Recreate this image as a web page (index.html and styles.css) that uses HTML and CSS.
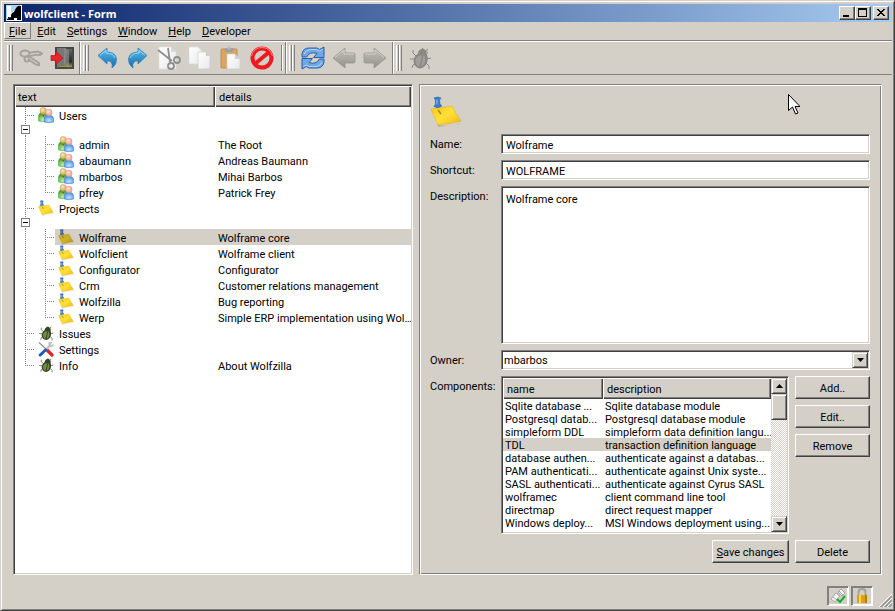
FILE: index.html
```html
<!DOCTYPE html>
<html lang="en">
<head>
<meta charset="utf-8">
<title>wolfclient - Form</title>
<link rel="stylesheet" href="styles.css">
</head>
<body>
<svg class="defs" aria-hidden="true">
  <defs>
    <linearGradient id="gNote" x1="0" y1="0" x2="1" y2="1"><stop offset="0" stop-color="#f8c818"/><stop offset=".5" stop-color="#ffe038"/><stop offset="1" stop-color="#efb510"/></linearGradient>
    <linearGradient id="gBlue" x1="0" y1="0" x2="0" y2="1"><stop offset="0" stop-color="#5cc0ee"/><stop offset="1" stop-color="#1468ac"/></linearGradient>
    <linearGradient id="gGray" x1="0" y1="0" x2="0" y2="1"><stop offset="0" stop-color="#c4c2bb"/><stop offset="1" stop-color="#93918a"/></linearGradient>
    <linearGradient id="gPage" x1="0" y1="0" x2="1" y2="1"><stop offset="0" stop-color="#fff"/><stop offset="1" stop-color="#e9e9e9"/></linearGradient>
    <linearGradient id="gDoor" x1="0" y1="0" x2="0" y2="1"><stop offset="0" stop-color="#666"/><stop offset=".7" stop-color="#282828"/><stop offset="1" stop-color="#a0a828"/></linearGradient>
    <radialGradient id="gGreen" cx=".5" cy=".8" r=".7"><stop offset="0" stop-color="#c8f0b0"/><stop offset="1" stop-color="#3aa52c"/></radialGradient>
    <radialGradient id="gBody" cx=".5" cy=".7" r=".7"><stop offset="0" stop-color="#c4e4ff"/><stop offset="1" stop-color="#3f8df0"/></radialGradient>
    <radialGradient id="gTan" cx=".4" cy=".35" r=".7"><stop offset="0" stop-color="#ffeab8"/><stop offset="1" stop-color="#d3a04c"/></radialGradient>
    <radialGradient id="gPink" cx=".4" cy=".35" r=".7"><stop offset="0" stop-color="#ffe6dc"/><stop offset="1" stop-color="#e89a88"/></radialGradient>
    <symbol id="users" viewBox="0 0 16 16">
      <path d="M.4 14V10q0-4.400 4.600-4.400t4.600 4.400v4q-4.600 1.500-9.200 0z" fill="url(#gGreen)" stroke="#4cad3e" stroke-width=".5"/>
      <path d="M4 8l1.400 2L6.500 8z" fill="#e02c18"/>
      <circle cx="5.200" cy="3.700" r="3.200" fill="url(#gTan)" stroke="#c89848" stroke-width=".5"/>
      <path d="M6.300 15v-2.700q0-4 4.600-4t4.700 4V15q-4.600 1.400-9.300 0z" fill="url(#gBody)" stroke="#3c82dc" stroke-width=".6"/>
      <circle cx="10.800" cy="5.400" r="3.300" fill="url(#gPink)" stroke="#de9484" stroke-width=".5"/>
    </symbol>
    <symbol id="note" viewBox="0 0 32 32">
      <path d="M7 29q12 2 24-2l-2 1-20 3z" fill="#9c9888" opacity=".6"/>
      <path d="M1 13 22 10q4 8 9 15-11 3-23 4Q4 21 1 13z" fill="url(#gNote)" stroke="#dcae18" stroke-width=".5"/>
      <path d="m8 14 3 4" stroke="#a98b20" stroke-width="1.500"/>
      <path d="M4 2q3.500-2 7 0l-1.500 2 .5 4 2 2q-4.500 3-8 .5L5.500 8 5.400 4z" fill="#3a7fca" stroke="#2860a8" stroke-width=".6"/>
      <path d="M7 3.500v5" stroke="#8cc0f0" stroke-width="1"/>
    </symbol>
    <symbol id="bug" viewBox="0 0 24 24">
      <path d="M8 10 5 7V4m3 9H2m6 4-3 2-1 3m11-11 4-3 0-3m-1 8 5-1m-5 5 3 3v3M13 5l2-3m1 4 4-3" fill="none" stroke="currentColor" stroke-width="1"/>
      <path d="M15 2.500q4 1.500 3 5 2.500 3 1.500 7.500-1.500 6.500-7.500 7.500-6-1-6.500-7 0-5 4.500-8 0-4 5-5z" fill="currentColor"/>
      <path class="bug-back" d="M11 9.500q-4 2.500-3.500 6.500 .5 3.500 3.500 5 2-5 3-11.500zM15.500 9q2.500 3 1.500 7-1 3.500-4 4.500 1-5.500 2.500-11.500z"/>
    </symbol>
    <symbol id="tools" viewBox="0 0 16 16">
      <path d="M1 1.500 9 9" stroke="#8e8e8e" stroke-width="1.200"/>
      <path d="m8.500 8.500 5.500 5.500" stroke="#d8242c" stroke-width="3.200" stroke-linecap="round"/>
      <path d="M12 4.500 8 8.500" stroke="#b8bcc0" stroke-width="2"/>
      <path d="M10.500 1.500q2-1.500 4 0l-2 1.500 1 1 2-1q.5 3-3 3-2.500-1.500-2-4.500z" fill="#b8bcc0"/>
      <path d="M7.500 9 2.200 14" stroke="#1c58c4" stroke-width="3" stroke-linecap="round"/>
    </symbol>
    <symbol id="arrow" viewBox="0 0 24 24">
      <path d="M1 12 13 2v5h8.500q1.500 0 1.500 1.500v7q0 1.500-1.500 1.500H13v5z" fill="url(#gGray)" stroke="#96948e" stroke-width=".8"/>
      <path d="M3 11.500l9-7.500v4h10" fill="none" stroke="#d0cec8" stroke-width="1"/>
    </symbol>
    <symbol id="curl" viewBox="0 0 24 24">
      <path d="M3 9.500 12 2v4q8.500 0 9.500 7 .5 5-4.500 9 1.500-7-5-7.300V18z" fill="url(#gBlue)" stroke="#2c80ba" stroke-width=".8"/>
      <path d="M5 9.300 11 4.500V7q7 0 9 5" fill="none" stroke="#a4e0fa" stroke-width=".9"/>
    </symbol>
  </defs>
</svg>
<div class="window">
  <header class="titlebar">
    <svg class="app-icon" viewBox="0 0 16 16"><path fill="#fff" d="M0 0h16v16H0z"/><path fill="#a8d4f0" d="M0 0h14v1H1v14H0zM5 1h7v2L5 8z"/><path d="M15 1v14H1v-1l4-2v-2l1-2 2-1 2-4 2-2zM4 12H2v1h1z"/><path fill="#fff" d="M8 13h3v2H8z"/></svg>
    <h1 class="title">wolfclient - Form</h1>
    <button class="win-btn" aria-label="Minimize"><svg viewBox="0 0 12 10"><path d="M2 7h6v2H2z"/></svg></button>
    <button class="win-btn" aria-label="Maximize"><svg viewBox="0 0 12 10"><path fill-rule="evenodd" d="M1 0h9v9H1zM2 2v6h7V2z"/></svg></button>
    <button class="win-btn win-close" aria-label="Close"><svg viewBox="0 0 12 10"><path d="M2 1h2v1h1v1h2V2h1V1h2v1H9v1H8v1H7v1h1v1h1v1h1v1H8V7H7V6H5v1H4v1H2V7h1V6h1V5h1V4H4V3H3V2H2z"/></svg></button>
  </header>
  <nav class="menubar">
    <button class="menu active"><u>F</u>ile</button>
    <button class="menu"><u>E</u>dit</button>
    <button class="menu"><u>S</u>ettings</button>
    <button class="menu"><u>W</u>indow</button>
    <button class="menu"><u>H</u>elp</button>
    <button class="menu"><u>D</u>eveloper</button>
  </nav>
  <div class="toolbars">
    <div class="toolbar">
      <span class="handle"></span>
      <button class="tool" aria-label="Login"><svg viewBox="0 0 24 24"><g fill="none" stroke="#a3a19b" stroke-width="2"><ellipse cx="6" cy="7.500" rx="4.500" ry="3"/><path d="M10 7 19 5.500l4 2-2 1.500-3-.5-7 1.500"/><path d="m9 10 11 7v2l-3-.5-8-5.500"/><circle cx="8" cy="13" r="2.500"/></g><path d="M11 8.500 20 7M10 12l8 5.500" stroke="#cfcdc7"/></svg></button>
      <button class="tool" aria-label="Exit"><svg viewBox="0 0 24 24"><path fill="#45484a" d="M5 1h19v22H5z"/><path fill="url(#gDoor)" d="M7 3h15v18H7z"/><path fill="#777" d="M7 2h9v15l-9 5z"/><path fill="#8d8d8d" d="m14 2 5 2v18l-5-3z" opacity=".7"/><path fill="#e8262c" stroke="#a81820" stroke-width=".7" d="M1 9.500h5V5.500l7 6.500-7 6.500v-4H1z"/></svg></button>
    </div>
    <div class="toolbar">
      <span class="handle"></span>
      <button class="tool" aria-label="Undo"><svg viewBox="0 0 24 24"><use href="#curl"/></svg></button>
      <button class="tool" aria-label="Redo"><svg class="flip" viewBox="0 0 24 24"><use href="#curl"/></svg></button>
      <button class="tool" aria-label="Cut"><svg viewBox="0 0 24 24"><path fill="url(#gPage)" stroke="#ddd" stroke-width=".6" d="M2 1h12l5 5v17H2z"/><path fill="#d8d8d8" d="M14 1v5h5z"/><g fill="none" stroke="#8f8f8f" stroke-width="1.800"><path d="m1 4 14 11M11 2l2 14"/><circle cx="20" cy="14" r="3"/><circle cx="14" cy="20" r="3"/></g></svg></button>
      <button class="tool" aria-label="Copy"><svg viewBox="0 0 24 24"><path fill="url(#gPage)" stroke="#d8d8d8" stroke-width=".6" d="M1 1h9l4 4v13H1z"/><path fill="url(#gPage)" stroke="#c8c8c8" stroke-width=".7" d="M10 6h8l4 4v13H10z"/><path fill="#ccc" d="M18 6v4h4z"/></svg></button>
      <button class="tool" aria-label="Paste"><svg viewBox="0 0 24 24"><rect x="2" y="3" width="16" height="19" rx="1" fill="#dba564" stroke="#c58c48"/><path fill="#a0a0a0" d="M6 2h8v4H6z"/><circle cx="10" cy="2" r="1.800" fill="#bbb"/><path fill="url(#gPage)" stroke="#ccc" stroke-width=".7" d="M8 8h8l5 5v10H8z"/><path fill="#d0d0d0" d="M16 8v5h5z"/></svg></button>
      <button class="tool" aria-label="Stop"><svg viewBox="0 0 24 24"><circle cx="12" cy="12" r="9.500" fill="none" stroke="#f01820" stroke-width="4"/><path d="m6 17 12-10" stroke="#f01820" stroke-width="4"/><path d="M1.500 10Q4 1.500 12 1.500T22.500 10" fill="none" stroke="#ff8480" stroke-width="1"/></svg></button>
      <span class="rule"></span>
    </div>
    <div class="toolbar">
      <span class="handle"></span>
      <button class="tool" aria-label="Refresh"><svg viewBox="0 0 24 24"><g fill="#6fa8e4" stroke="#245ea8" stroke-width="1"><path d="M1 11V8q1-6 7-6h8l2.500 1.500L23 1v10.500H12.500l3.500-4Q9 5 5.500 11z"/><path d="M23 13v3q-1 6-7 6H8l-2.500-1.500L1 23V12.500h10.500L8 16.500q7 2.500 10.500-3.500z"/></g><path d="M3 8q2-4.500 6-4.500h7l2.500 1.500 3-1.500M21 16q-2 4.500-6 4.500H8L5.500 19l-3 1.500" fill="none" stroke="#b0d4f6"/></svg></button>
      <button class="tool" aria-label="Back"><svg viewBox="0 0 24 24"><use href="#arrow"/></svg></button>
      <button class="tool" aria-label="Forward"><svg class="flip" viewBox="0 0 24 24"><use href="#arrow"/></svg></button>
    </div>
    <div class="toolbar">
      <span class="handle"></span>
      <button class="tool bug-gray" aria-label="Debug"><svg viewBox="0 0 24 24"><use href="#bug"/></svg></button>
    </div>
  </div>
  <main class="content">
    <section class="tree sunken">
      <table class="tree-table">
        <thead><tr><th class="col-text">text</th><th>details</th></tr></thead>
        <tbody>
          <tr class="parent"><td><div class="node"><span class="guide branch"><button class="expander" aria-label="Collapse Users"></button></span><svg><use href="#users"/></svg>Users</div></td><td></td></tr>
          <tr><td><div class="node"><span class="guide line"></span><span class="guide branch"></span><svg><use href="#users"/></svg>admin</div></td><td>The Root</td></tr>
          <tr><td><div class="node"><span class="guide line"></span><span class="guide branch"></span><svg><use href="#users"/></svg>abaumann</div></td><td>Andreas Baumann</td></tr>
          <tr><td><div class="node"><span class="guide line"></span><span class="guide branch"></span><svg><use href="#users"/></svg>mbarbos</div></td><td>Mihai Barbos</td></tr>
          <tr><td><div class="node"><span class="guide line"></span><span class="guide branch last"></span><svg><use href="#users"/></svg>pfrey</div></td><td>Patrick Frey</td></tr>
          <tr class="parent"><td><div class="node"><span class="guide branch"><button class="expander" aria-label="Collapse Projects"></button></span><svg><use href="#note"/></svg>Projects</div></td><td></td></tr>
          <tr class="selected"><td><div class="node"><span class="guide line"></span><span class="guide branch"></span><svg><use href="#note"/></svg>Wolframe</div></td><td>Wolframe core</td></tr>
          <tr><td><div class="node"><span class="guide line"></span><span class="guide branch"></span><svg><use href="#note"/></svg>Wolfclient</div></td><td>Wolframe client</td></tr>
          <tr><td><div class="node"><span class="guide line"></span><span class="guide branch"></span><svg><use href="#note"/></svg>Configurator</div></td><td>Configurator</td></tr>
          <tr><td><div class="node"><span class="guide line"></span><span class="guide branch"></span><svg><use href="#note"/></svg>Crm</div></td><td>Customer relations management</td></tr>
          <tr><td><div class="node"><span class="guide line"></span><span class="guide branch"></span><svg><use href="#note"/></svg>Wolfzilla</div></td><td>Bug reporting</td></tr>
          <tr><td><div class="node"><span class="guide line"></span><span class="guide branch last"></span><svg><use href="#note"/></svg>Werp</div></td><td>Simple ERP implementation using Wol…</td></tr>
          <tr><td><div class="node"><span class="guide branch"></span><svg class="bug-green"><use href="#bug"/></svg>Issues</div></td><td></td></tr>
          <tr><td><div class="node"><span class="guide branch"></span><svg><use href="#tools"/></svg>Settings</div></td><td></td></tr>
          <tr><td><div class="node"><span class="guide branch last"></span><svg class="bug-green"><use href="#bug"/></svg>Info</div></td><td>About Wolfzilla</td></tr>
        </tbody>
      </table>
    </section>
    <form class="panel">
      <svg class="panel-icon" viewBox="0 0 32 32"><use href="#note"/></svg>
      <label for="name">Name:</label>
      <input class="sunken field" id="name" type="text" value="Wolframe">
      <label for="shortcut">Shortcut:</label>
      <input class="sunken field" id="shortcut" type="text" value="WOLFRAME">
      <label for="description">Description:</label>
      <textarea class="sunken field" id="description">Wolframe core</textarea>
      <label for="owner">Owner:</label>
      <span class="combo sunken"><select id="owner"><option>mbarbos</option></select><span class="drop"><svg viewBox="0 0 7 4"><path d="M0 0h7L3.500 4z"/></svg></span></span>
      <span class="label">Components:</span>
      <div class="components">
        <div class="list sunken">
          <div class="list-view">
            <table class="list-table">
              <thead><tr><th class="col-name">name</th><th>description</th></tr></thead>
              <tbody>
                <tr><td>Sqlite database ...</td><td>Sqlite database module</td></tr>
                <tr><td>Postgresql datab...</td><td>Postgresql database module</td></tr>
                <tr><td>simpleform DDL</td><td>simpleform data definition langu...</td></tr>
                <tr class="selected"><td>TDL</td><td>transaction definition language</td></tr>
                <tr><td>database authen...</td><td>authenticate against a databas...</td></tr>
                <tr><td>PAM authenticati...</td><td>authenticate against Unix syste...</td></tr>
                <tr><td>SASL authenticati...</td><td>authenticate against Cyrus SASL</td></tr>
                <tr><td>wolframec</td><td>client command line tool</td></tr>
                <tr><td>directmap</td><td>direct request mapper</td></tr>
                <tr><td>Windows deploy...</td><td>MSI Windows deployment using...</td></tr>
              </tbody>
            </table>
          </div>
          <div class="scrollbar">
            <button type="button" class="scroll-btn" aria-label="Scroll up"><svg viewBox="0 0 7 4"><path d="M0 4h7L3.500 0z"/></svg></button>
            <div class="thumb"></div>
            <button type="button" class="scroll-btn" aria-label="Scroll down"><svg viewBox="0 0 7 4"><path d="M0 0h7L3.500 4z"/></svg></button>
          </div>
        </div>
        <div class="side">
          <button type="button" class="btn">Add..</button>
          <button type="button" class="btn">Edit..</button>
          <button type="button" class="btn">Remove</button>
        </div>
      </div>
      <div class="actions">
        <button type="button" class="btn"><u>S</u>ave changes</button>
        <button type="button" class="btn">Delete</button>
      </div>
    </form>
  </main>
  <footer class="statusbar">
    <span class="status"><svg viewBox="0 0 16 16"><path fill="#f4f4f4" stroke="#8c8c8c" stroke-width=".7" d="m1 11 5-6 4 3-5 6zM8 4l3-3 4 4-3 3z"/><path d="m6 5 4 3M3 9l4 3M9 3l4 4" stroke="#aaa"/><path d="m7 11 3 3 5-6" fill="none" stroke="#10b030" stroke-width="2"/></svg></span>
    <span class="status"><svg viewBox="0 0 16 16"><path d="M4.500 8V4q0-3 3.500-3t3.500 3v4" fill="none" stroke="#a4a49c" stroke-width="2"/><rect x="3" y="7" width="10" height="8" fill="#e0a010"/><path fill="#f8dc58" d="M5 7h2v8H5z"/><path fill="#b87c08" d="M11 7h2v8h-2z"/></svg></span>
    <svg class="grip" viewBox="0 0 13 13"><path d="M0 13 13 0M4 13l9-9M8 13l5-5" stroke="#fff"/><path d="M1.500 13 13 1.500M2.500 13 13 2.500M5.500 13 13 5.500M6.500 13 13 6.500M9.500 13 13 9.500M10.500 13l2.500-2.500" stroke="#808080"/></svg>
  </footer>
</div>
<svg class="cursor" viewBox="0 0 12 21" aria-hidden="true"><path d="M.5.5v16l4-3.500 3 7 2.500-1-3-6.500h5z" fill="#fff" stroke="#000"/></svg>
</body>
</html>
```
FILE: styles.css
```css
:root {
  --face: #d4d0c8;
  --shadow: #808080;
  --dark: #404040;
}

* { box-sizing: border-box; }

body {
  margin: 0;
  font: 11px/13px Roboto, sans-serif;
  color: #000;
  background: var(--face);
}

button, input, textarea, select {
  font: inherit;
  color: inherit;
  margin: 0;
  border-radius: 0;
}

button { padding: 0; border: 0; background: none; }
svg { display: block; flex: none; }
.defs { position: absolute; width: 0; height: 0; }
.flip { transform: scaleX(-1); }

.window {
  display: flex;
  flex-direction: column;
  height: 100vh;
  padding: 3px 2px 2px 3px;
  border: 1px solid;
  border-color: var(--face) var(--dark) var(--dark) var(--face);
  box-shadow: inset 1px 1px #fff, inset -1px -1px var(--shadow);
}

/* title bar */
.titlebar {
  display: flex;
  align-items: center;
  flex: none;
  height: 18px;
  padding: 0 3px 0 2px;
  background: linear-gradient(90deg, #0a246a, #a6caf0);
}
.app-icon { width: 16px; height: 16px; }
.title {
  flex: 1;
  margin: 0 2px;
  color: #fff;
  font: 700 11px/13px "Open Sans", sans-serif;
}
.win-btn {
  display: grid;
  place-items: center;
  width: 16px;
  height: 14px;
  background: var(--face);
  border: 1px solid;
  border-color: #fff var(--dark) var(--dark) #fff;
  box-shadow: inset -1px -1px var(--shadow);
}
.win-btn svg { width: 12px; height: 10px; margin-right: 1px; }
.win-close { margin-left: 2px; }

/* menu bar */
.menubar {
  display: flex;
  flex: none;
  gap: 1px;
  height: 19px;
  padding-bottom: 1px;
  border-bottom: 1px solid var(--shadow);
}
.menu { padding: 2px 4px 0; border: 1px solid transparent; }
.menu.active { border-color: #fff var(--shadow) var(--shadow) #fff; }

/* toolbars */
.toolbars {
  display: flex;
  flex: none;
  height: 34px;
  border-top: 1px solid #fff;
  border-bottom: 1px solid var(--shadow);
}
.toolbar {
  display: flex;
  align-items: center;
  padding: 0 2px 0 3px;
  border-right: 1px solid var(--shadow);
  box-shadow: 1px 0 #fff;
}
.toolbar:last-child { border: 0; box-shadow: none; }
.handle {
  width: 6px;
  height: 26px;
  margin-right: 2px;
  background: linear-gradient(90deg, #fff 0 1px, var(--face) 1px 2px, var(--shadow) 2px 3px, #fff 3px 4px, var(--face) 4px 5px, var(--shadow) 5px 6px);
}
.tool { width: 31px; height: 30px; display: grid; place-items: center; }
.tool svg { width: 24px; height: 24px; }
.rule {
  width: 2px;
  height: 26px;
  margin-left: 4px;
  background: linear-gradient(90deg, var(--shadow) 50%, #fff 50%);
}
.bug-gray { color: #8a8882; fill: #a09e98; }
.bug-green { color: #3a4028; fill: #6f9040; }

/* shared frames */
.sunken {
  border: 1px solid;
  border-color: var(--shadow) #fff #fff var(--shadow);
  box-shadow: inset 1px 1px var(--dark), inset -1px -1px var(--face);
  background: #fff;
}
table { border-collapse: collapse; table-layout: fixed; width: 100%; }
th, td {
  font-weight: 400;
  text-align: left;
  white-space: nowrap;
  overflow: hidden;
}
thead th {
  height: 21px;
  padding: 1px 4px 0;
  background: var(--face);
  box-shadow: inset 1px 1px #fff, inset -1px -1px var(--dark), inset -2px -2px var(--shadow);
}

/* content */
.content {
  display: grid;
  grid-template-columns: 400fr 463fr;
  gap: 6px;
  flex: 1;
  min-height: 0;
  padding: 9px 10px 0 9px;
}
.tree { padding: 1px; min-width: 0; overflow: hidden; }
.tree .col-text { width: 200px; padding-left: 3px; }
.tree-table td { height: 16px; padding: 3px 0 0 3px; vertical-align: top; }
.tree-table td:first-child { padding: 0; }
.node { display: flex; height: 16px; line-height: 20px; }
.parent .node { height: 29px; }
.node svg { width: 16px; height: 16px; margin: 0 5px 0 3px; }
.guide {
  width: 20px;
  background-repeat: no-repeat;
}
.line {
  background-image: repeating-linear-gradient(var(--shadow) 0 1px, transparent 1px 2px);
  background-size: 1px 100%;
  background-position: 10px 0;
}
.branch {
  background-image: repeating-linear-gradient(var(--shadow) 0 1px, transparent 1px 2px), repeating-linear-gradient(90deg, var(--shadow) 0 1px, transparent 1px 2px);
  background-size: 1px 100%, 10px 1px;
  background-position: 10px 0, 10px 8px;
}
.last { background-size: 1px 8px, 10px 1px; }
.expander {
  display: block;
  width: 9px;
  height: 9px;
  margin: 18px 0 0 6px;
  border: 1px solid var(--shadow);
  background: linear-gradient(#000, #000) center / 5px 1px no-repeat #fff;
}
.tree-table .selected td { background: var(--face); }
.tree-table .selected td:first-child {
  background: linear-gradient(var(--face), var(--face)) 40px 0 no-repeat;
}
.selected svg { filter: brightness(.8); }

/* form panel */
.panel {
  display: grid;
  grid-template-columns: 65px minmax(0, 1fr);
  grid-template-rows: 32px 20px 20px minmax(0, 1fr) 20px 158px 23px;
  gap: 6px;
  min-width: 0;
  padding: 11px 11px 11px 10px;
  border: 1px solid;
  border-color: var(--shadow) #fff #fff var(--shadow);
  box-shadow: inset 1px 1px #fff, inset -1px -1px var(--shadow);
}
.panel-icon { width: 32px; height: 32px; grid-column: 1 / -1; }
.panel label, .label { padding-top: 4px; }
.field { width: 100%; padding: 2px 4px 0; outline: 0; }
textarea.field { resize: none; padding-top: 6px; height: 100%; }
.combo { display: flex; padding: 1px; }
.combo select {
  flex: 1;
  min-width: 0;
  padding: 0 1px;
  border: 0;
  appearance: none;
  background: #fff;
  outline: 0;
}
.drop, .scroll-btn, .thumb {
  display: grid;
  place-items: center;
  width: 16px;
  background: var(--face);
  border: 1px solid;
  border-color: var(--face) var(--dark) var(--dark) var(--face);
  box-shadow: inset 1px 1px #fff, inset -1px -1px var(--shadow);
}
.drop svg, .scroll-btn svg { width: 7px; height: 4px; }
.components { display: grid; grid-template-columns: minmax(0, 1fr) 75px; gap: 6px; }
.list { display: flex; padding: 1px; min-height: 0; height: 158px; }
.list-view { flex: 1; min-width: 0; overflow: hidden; }
.col-name { width: 100px; }
.list-table td { height: 13px; line-height: 11px; padding: 2px 0 0 2px; }
.list-table .selected td { background: var(--face); }
.scrollbar {
  display: flex;
  flex-direction: column;
  width: 16px;
  background: repeating-conic-gradient(#fff 0 25%, var(--face) 0 50%) 0 0 / 2px 2px;
}
.scroll-btn { height: 16px; }
.thumb { height: 26px; margin-bottom: auto; }
.side { display: flex; flex-direction: column; gap: 6px; }
.btn {
  height: 23px;
  padding-top: 1px;
  background: var(--face);
  border: 1px solid;
  border-color: #fff var(--dark) var(--dark) #fff;
  box-shadow: inset -1px -1px var(--shadow);
}
.actions {
  grid-column: 1 / -1;
  display: grid;
  grid-template-columns: 77px 75px;
  justify-content: end;
  gap: 6px;
}

/* status bar */
.statusbar {
  display: flex;
  align-items: center;
  flex: none;
  gap: 2px;
  justify-content: flex-end;
  height: 33px;
}
.status {
  display: grid;
  place-items: center;
  width: 22px;
  height: 20px;
  margin-top: 9px;
  border: 1px solid;
  border-color: var(--shadow) #fff #fff var(--shadow);
  box-shadow: inset 1px 1px var(--shadow), inset -1px -1px #fff;
}
.status svg { width: 16px; height: 16px; }
.grip { width: 13px; height: 13px; margin: 0 0 1px 4px; align-self: flex-end; }

.cursor {
  position: absolute;
  left: 788px;
  top: 94px;
  width: 12px;
  height: 21px;
}
```
